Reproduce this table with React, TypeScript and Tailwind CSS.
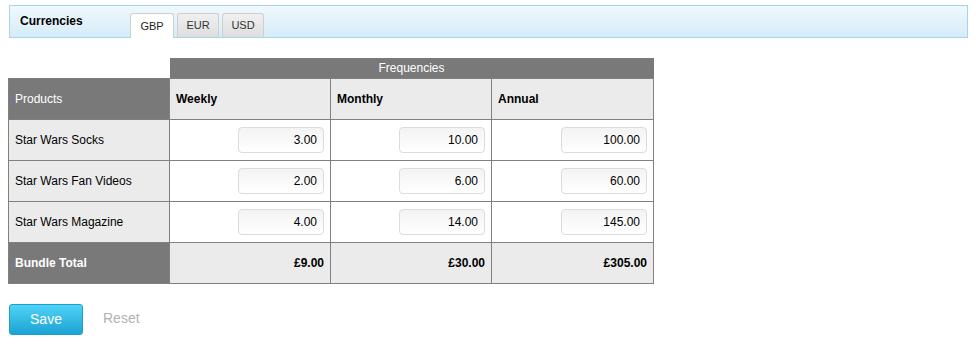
import React, { useState } from "react";

type Product = {
  name: string;
  prices: [string, string, string];
};

const currencies = ["GBP", "EUR", "USD"];
const frequencies = ["Weekly", "Monthly", "Annual"];

const initialProducts: Product[] = [
  { name: "Star Wars Socks", prices: ["3.00", "10.00", "100.00"] },
  { name: "Star Wars Fan Videos", prices: ["2.00", "6.00", "60.00"] },
  { name: "Star Wars Magazine", prices: ["4.00", "14.00", "145.00"] },
];

const cell = "border border-[#808080] h-[41px] p-0";

const App: React.FC = () => {
  const [active, setActive] = useState("GBP");
  const [products, setProducts] = useState(initialProducts);

  const totals = [0, 1, 2].map((i) =>
    products.reduce((sum, p) => sum + (parseFloat(p.prices[i]) || 0), 0)
  );

  const update = (row: number, col: number, value: string) => {
    setProducts((prev) =>
      prev.map((p, r) => {
        if (r !== row) return p;
        const prices = [...p.prices] as Product["prices"];
        prices[col] = value;
        return { ...p, prices };
      })
    );
  };

  return (
    <div className="w-[976px] h-[344px] bg-white font-['Liberation_Sans',Arial,sans-serif] text-[12px] text-black pt-[5px]">
      {/* currency tabs */}
      <div className="mx-[9px] w-[959px] h-[33px] border border-[#a9d3e6] bg-gradient-to-b from-[#f0f8fe] to-[#d5ecf8] flex items-end">
        <div className="w-[120px] self-start pt-[6px] pl-[10px] font-bold">Currencies</div>
        <div className="flex gap-[3px] mb-[-1px]">
          {currencies.map((c) => (
            <button
              key={c}
              onClick={() => setActive(c)}
              className={
                c === active
                  ? "h-[25px] w-[44px] rounded-t-[3px] border border-b-0 border-[#d0d0d0] bg-white text-[11px] text-[#222] pt-[1px]"
                  : "h-[24px] w-[42px] rounded-t-[3px] border border-b-0 border-[#cfcfcf] bg-gradient-to-b from-[#f0f0f0] to-[#dedede] text-[11px] text-[#333]"
              }
            >
              {c}
            </button>
          ))}
        </div>
      </div>

      {/* price grid */}
      <table className="ml-[8px] mt-[20px] border-collapse table-fixed w-[645px]">
        <colgroup>
          <col className="w-[161px]" />
          <col className="w-[161px]" />
          <col className="w-[161px]" />
          <col className="w-[162px]" />
        </colgroup>
        <thead>
          <tr>
            <th className="p-0 h-[20px]" />
            <th
              colSpan={3}
              className="p-0 h-[20px] bg-[#797979] text-white font-normal text-center leading-[20px]"
            >
              Frequencies
            </th>
          </tr>
          <tr>
            <th className={`${cell} bg-[#797979] text-white font-normal text-left pl-[6px]`}>
              Products
            </th>
            {frequencies.map((f) => (
              <th key={f} className={`${cell} bg-[#ebebeb] font-bold text-left pl-[6px]`}>
                {f}
              </th>
            ))}
          </tr>
        </thead>
        <tbody>
          {products.map((p, r) => (
            <tr key={p.name}>
              <td className={`${cell} bg-[#ebebeb] pl-[6px]`}>{p.name}</td>
              {p.prices.map((v, c) => (
                <td key={c} className={`${cell} bg-white text-right pr-[6px]`}>
                  <input
                    value={v}
                    onChange={(e) => update(r, c, e.target.value)}
                    className="w-[86px] h-[26px] rounded-[4px] border border-[#dcdcdc] bg-gradient-to-b from-[#f3f3f3] to-white text-right pr-[6px] text-[12px] outline-none align-middle"
                  />
                </td>
              ))}
            </tr>
          ))}
          <tr>
            <td className={`${cell} bg-[#797979] text-white font-bold pl-[6px]`}>Bundle Total</td>
            {totals.map((t, i) => (
              <td key={i} className={`${cell} bg-[#ebebeb] font-bold text-right pr-[6px]`}>
                £{t.toFixed(2)}
              </td>
            ))}
          </tr>
        </tbody>
      </table>

      {/* actions */}
      <div className="flex items-center ml-[9px] mt-[20px] gap-[20px]">
        <button className="w-[74px] h-[31px] rounded-[3px] border border-[#1a9fd0] bg-gradient-to-b from-[#4fd3f7] to-[#17a3d3] text-white text-[14px]">
          Save
        </button>
        <button className="text-[#b3b3b3] text-[14px] mb-[3px]">Reset</button>
      </div>
    </div>
  );
};

export default App;
